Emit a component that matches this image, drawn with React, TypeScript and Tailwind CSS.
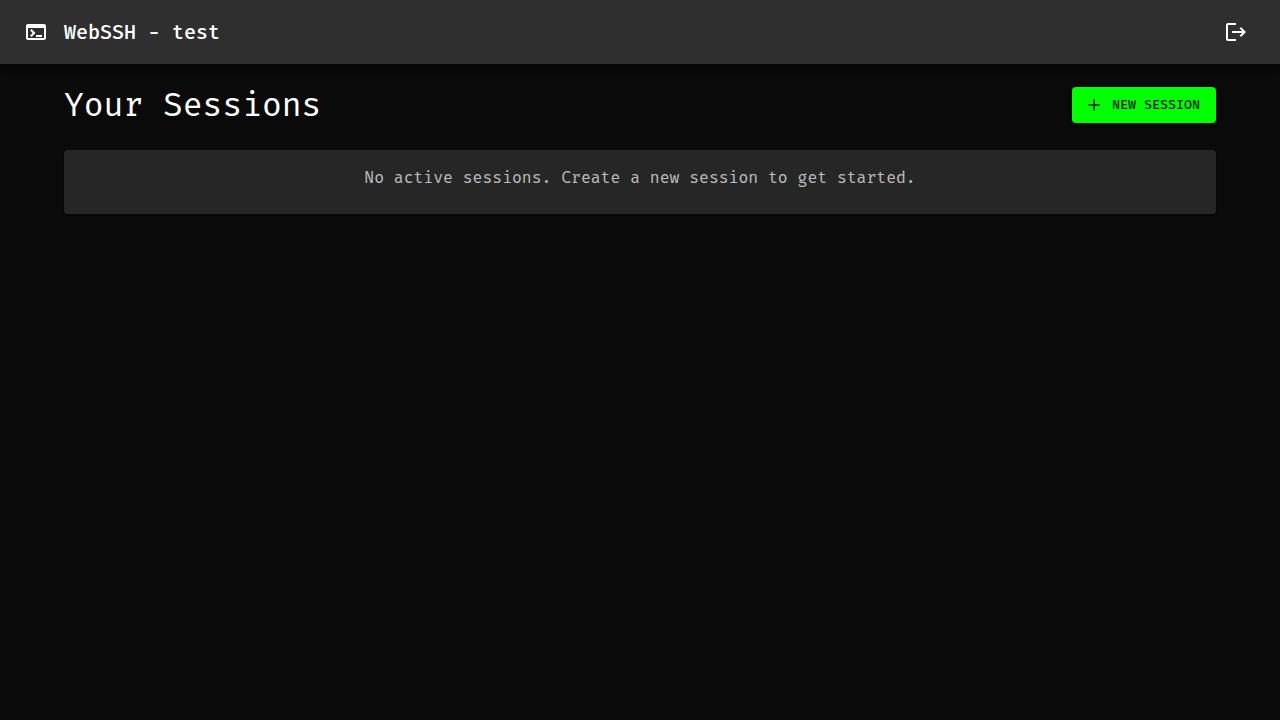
import React from "react";

function TerminalIcon() {
  return (
    <svg viewBox="0 0 24 24" className="size-6 shrink-0 fill-current" aria-hidden="true">
      <path d="M20 4H4c-1.11 0-2 .9-2 2v12c0 1.1.89 2 2 2h16c1.1 0 2-.9 2-2V6c0-1.1-.89-2-2-2m0 14H4V8h16zm-2-1h-6v-2h6zM7.5 17l-1.41-1.41L8.67 13l-2.59-2.59L7.5 9l4 4z" />
    </svg>
  );
}

function LogoutIcon() {
  return (
    <svg viewBox="0 0 24 24" className="size-6 fill-current" aria-hidden="true">
      <path d="m17 7-1.41 1.41L18.17 11H8v2h10.17l-2.58 2.58L17 17l5-5zM4 5h8V3H4c-1.1 0-2 .9-2 2v14c0 1.1.9 2 2 2h8v-2H4z" />
    </svg>
  );
}

function AddIcon() {
  return (
    <svg viewBox="0 0 24 24" className="size-5 fill-current" aria-hidden="true">
      <path d="M19 13h-6v6h-2v-6H5v-2h6V5h2v6h6z" />
    </svg>
  );
}

export default function App() {
  return (
    <div className="min-h-screen bg-[#0a0a0a] font-['Fira_Code','Fira_Mono','DejaVu_Sans_Mono',monospace] text-white">
      <header className="flex h-16 items-center bg-[#2f2f2f] px-6 shadow-[0_2px_4px_-1px_rgba(0,0,0,0.2),0_4px_5px_0_rgba(0,0,0,0.14),0_1px_10px_0_rgba(0,0,0,0.12)]">
        <TerminalIcon />
        <div className="ml-4 grow font-['Fira_Mono','DejaVu_Sans_Mono',monospace] text-xl leading-8 font-medium">
          WebSSH - test
        </div>
        <button type="button" aria-label="Log out" className="rounded-full p-2">
          <LogoutIcon />
        </button>
      </header>
      <main className="mx-auto max-w-[1200px] px-6 pt-5">
        <div className="mb-6 flex items-center justify-between">
          <h1 className="font-['Fira_Mono','DejaVu_Sans_Mono',monospace] text-[33px] leading-[42px] font-normal">
            Your Sessions
          </h1>
          <button
            type="button"
            className="flex h-9 items-center gap-2 rounded bg-[#00ff00] pr-4 pl-3 text-[13px] leading-6 font-medium text-black/87 uppercase shadow-[0_3px_1px_-2px_rgba(0,0,0,0.2),0_2px_2px_0_rgba(0,0,0,0.14),0_1px_5px_0_rgba(0,0,0,0.12)]"
          >
            <AddIcon />
            New Session
          </button>
        </div>
        <section className="rounded bg-[#262626] px-4 pt-4 pb-6 shadow-[0_2px_1px_-1px_rgba(0,0,0,0.2),0_1px_1px_0_rgba(0,0,0,0.14),0_1px_3px_0_rgba(0,0,0,0.12)]">
          <p className="text-center text-base leading-6 text-white/70">
            No active sessions. Create a new session to get started.
          </p>
        </section>
      </main>
    </div>
  );
}
